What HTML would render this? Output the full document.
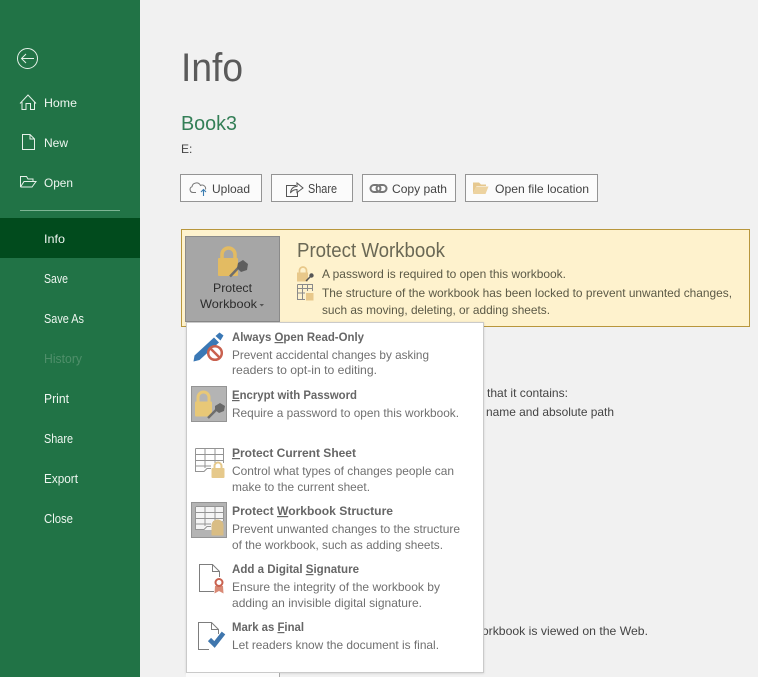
<!DOCTYPE html>
<html><head><meta charset="utf-8"><title>Info</title>
<style>
html,body{margin:0;padding:0;background:#f1f1f1;width:758px;height:677px;overflow:hidden}
svg{display:block}
text{font-family:"Liberation Sans",sans-serif;font-size:12px;white-space:pre}
.n{fill:#eef6f0}
.b{font-weight:bold;fill:#666}
.d{fill:#707070}
.y{fill:#5b5946}
.k{fill:#444}
</style></head><body>
<svg width="758" height="677" viewBox="0 0 758 677" xmlns="http://www.w3.org/2000/svg">
<defs>
<filter id="s" x="-5%" y="-5%" width="110%" height="110%"><feDropShadow dx="0" dy="0.500" stdDeviation="1" flood-color="#000" flood-opacity=".14"/></filter>
<g id="sheet" fill="none" stroke="#949494" stroke-width="1"><path d="M.5 .5H28.5V15M.5 .5V23.500H9L12 20.500H16"/><path d="M.5 6.500H28.5M.5 12.500H28.5M.5 18H16M10 .5V20M20 .5V15"/></g>
</defs>
<rect width="758" height="677" fill="#f1f1f1"/>
<!-- sidebar -->
<rect width="140" height="677" fill="#217346"/>
<rect y="218" width="140" height="40" fill="#014b1d"/>
<rect x="20" y="210" width="100" height="1" fill="#7db594"/>
<g fill="none" stroke="#e6f1e9" stroke-width="1">
<circle cx="27.500" cy="58.500" r="10"/>
<path d="M34 58.500H21.500M26 54L21.500 58.500L26 63"/>
<path d="M20 103.500L28 95L36 103.500M22 102V109.500H26V103.500H30.500V109.500H34.500V102"/>
<path d="M22.500 134.500H30L34.500 139V149.500H22.500ZM30 134.500V139H34.500"/>
<path d="M20.500 187V176.500H26.500L28 179H33V181.500M20.500 187H32L36 181.500H24L20.500 187"/>
</g>
<text class="n" x="44" y="107" textLength="33" lengthAdjust="spacingAndGlyphs">Home</text>
<text class="n" x="44" y="147" textLength="24" lengthAdjust="spacingAndGlyphs">New</text>
<text class="n" x="44" y="187" textLength="29" lengthAdjust="spacingAndGlyphs">Open</text>
<text class="n" x="44" y="243" textLength="21" lengthAdjust="spacingAndGlyphs">Info</text>
<text class="n" x="44" y="283" textLength="24" lengthAdjust="spacingAndGlyphs" style="font-size:13px">Save</text>
<text class="n" x="44" y="323" textLength="40" lengthAdjust="spacingAndGlyphs" style="font-size:13px">Save As</text>
<text x="44" y="363" textLength="38" lengthAdjust="spacingAndGlyphs" fill="#4f8f6a" style="font-size:13px">History</text>
<text class="n" x="44" y="403" textLength="25" lengthAdjust="spacingAndGlyphs" style="font-size:13px">Print</text>
<text class="n" x="44" y="443" textLength="29" lengthAdjust="spacingAndGlyphs" style="font-size:13px">Share</text>
<text class="n" x="44" y="483" textLength="34" lengthAdjust="spacingAndGlyphs" style="font-size:13px">Export</text>
<text class="n" x="44" y="523" textLength="29" lengthAdjust="spacingAndGlyphs" style="font-size:13px">Close</text>
<!-- header -->
<text x="181" y="81" textLength="62" lengthAdjust="spacingAndGlyphs" style="font-size:40px" fill="#5a5a5a">Info</text>
<text x="181" y="130" textLength="56" lengthAdjust="spacingAndGlyphs" style="font-size:20px" fill="#347f57">Book3</text>
<text class="k" x="181" y="153">E:</text>
<!-- buttons -->
<g fill="#fbfbfb" stroke="#949494">
<rect x="180.500" y="174.500" width="81" height="27"/>
<rect x="271.500" y="174.500" width="81" height="27"/>
<rect x="362.500" y="174.500" width="93" height="27"/>
<rect x="465.500" y="174.500" width="132" height="27"/>
</g>
<path d="M196 192.500H193A3 3 0 0 1 192 186.700A4.500 4.500 0 0 1 200.500 185.500A3.500 3.500 0 0 1 205.500 189.500" fill="none" stroke="#777"/>
<path d="M203.500 196V189.500M201 192L203.500 189.500L206 192" fill="none" stroke="#3a7cb0" stroke-width="1.100"/>
<path d="M296 185.500H286.500V196.500H297.500V191" fill="none" stroke="#555"/>
<path d="M290.500 193C291 188 294 186.500 297 186.500V183L303 188L297 192.500V189.500C294.500 189.500 292 190.500 290.500 193Z" fill="#fbfbfb" stroke="#555"/>
<rect x="370.500" y="185" width="10" height="7" rx="3.500" fill="none" stroke="#777" stroke-width="2"/>
<rect x="376.500" y="185" width="10" height="7" rx="3.500" fill="none" stroke="#777" stroke-width="2"/>
<path d="M473 193.500V182.500H479L481 184.500H486V186H476.500Z" fill="#e6c88f"/><path d="M473 194H485.500L488.500 186.500H476Z" fill="#edd3a0"/>
<g class="k">
<text x="212" y="193" textLength="38" lengthAdjust="spacingAndGlyphs">Upload</text>
<text x="308" y="193" textLength="29" lengthAdjust="spacingAndGlyphs" style="font-size:13px">Share</text>
<text x="392" y="193" textLength="55" lengthAdjust="spacingAndGlyphs">Copy path</text>
<text x="495" y="193" textLength="94" lengthAdjust="spacingAndGlyphs">Open file location</text>
</g>
<!-- background text -->
<g class="k">
<text x="487" y="397" textLength="81" lengthAdjust="spacingAndGlyphs">that it contains:</text>
<text x="486" y="416" textLength="128" lengthAdjust="spacingAndGlyphs">name and absolute path</text>
<text x="473" y="635" textLength="175" lengthAdjust="spacingAndGlyphs">workbook is viewed on the Web.</text>
</g>
<!-- banner -->
<rect x="181.500" y="229.500" width="568" height="97" fill="#fef2cd" stroke="#b8963c"/>
<rect x="185.500" y="236.500" width="94" height="85" fill="#a6a6a6" stroke="#8a8a8a"/>
<path d="M222 259V254.500A6.500 6.500 0 0 1 235 254.500V259" fill="none" stroke="#e3bb62" stroke-width="3.500"/>
<rect x="218" y="258" width="20" height="18" rx="1" fill="#e3bb62"/>
<path d="M230 276.500L239 267" stroke="#6e6e6e" stroke-width="2.500" fill="none"/>
<path d="M238 263L243 260L248 264L247 270L241 272L237 268Z" fill="#5e5e5e"/>
<text x="213" y="292" textLength="39" lengthAdjust="spacingAndGlyphs" fill="#2c2c2c">Protect</text>
<text x="200" y="308" textLength="57" lengthAdjust="spacingAndGlyphs" fill="#2c2c2c">Workbook</text>
<path d="M259.500 304H264L261.750 306.500Z" fill="#555"/>
<text class="y" x="297" y="257" textLength="148" lengthAdjust="spacingAndGlyphs" style="font-size:20px;fill:#6a6855">Protect Workbook</text>
<text class="y" x="322" y="278" textLength="244" lengthAdjust="spacingAndGlyphs">A password is required to open this workbook.</text>
<text class="y" x="322" y="297" textLength="410" lengthAdjust="spacingAndGlyphs">The structure of the workbook has been locked to prevent unwanted changes,</text>
<text class="y" x="322" y="314" textLength="228" lengthAdjust="spacingAndGlyphs">such as moving, deleting, or adding sheets.</text>
<path d="M299.500 273V270.500A3.500 3.500 0 0 1 306.500 270.500V273" fill="none" stroke="#e8c88a" stroke-width="1.700"/>
<rect x="297" y="272.500" width="11" height="9" fill="#e8c88a"/>
<path d="M306 281L311 276" stroke="#555" stroke-width="1.500"/><circle cx="311.500" cy="275.500" r="2.200" fill="#555"/>
<g fill="none" stroke="#8a8a8a"><path d="M297.500 284.500H312.500V291M297.500 284.500V299.500H305M297.500 288.500H312.500M297.500 293H305M302.500 284.500V299.500M307.500 284.500V291"/></g>
<rect x="306" y="293" width="7.500" height="7.500" fill="#e8c88a"/>
<!-- menu -->
<rect x="186.500" y="322.500" width="297" height="350" fill="#fff" stroke="#cacaca" filter="url(#s)"/>
<rect x="186" y="673" width="93" height="4" fill="#fbfbfb"/>
<rect x="279" y="673" width="1" height="4" fill="#a8a8a8"/>
<!-- read only -->
<path d="M193.500 361.500L194.500 355.500L214 337.500L219 342.500L199.500 360Z" fill="#3a78b5"/>
<path d="M215.500 336L219.500 332.500L223.500 335.500L220.500 340.500Z" fill="#3a78b5"/>
<circle cx="215" cy="353" r="6.800" fill="#fff" stroke="#c9614f" stroke-width="2.500"/>
<path d="M210.500 348.500L219.500 357.500" stroke="#c9614f" stroke-width="2.500"/>
<text class="b" x="232" y="341" textLength="132" lengthAdjust="spacingAndGlyphs">Always <tspan text-decoration="underline">O</tspan>pen Read-Only</text>
<text class="d" x="232" y="359" textLength="197" lengthAdjust="spacingAndGlyphs">Prevent accidental changes by asking</text>
<text class="d" x="232" y="374" textLength="145" lengthAdjust="spacingAndGlyphs">readers to opt-in to editing.</text>
<!-- encrypt -->
<rect x="191.500" y="386.500" width="35" height="35" fill="#b4b4b4" stroke="#949494"/>
<path d="M198 402.500V397.500A5.500 5.500 0 0 1 209 397.500V402.500" fill="none" stroke="#e8c877" stroke-width="3"/>
<rect x="195" y="401.500" width="17" height="15" rx="1" fill="#e8c877"/>
<path d="M208 418L216 410" stroke="#6e6e6e" stroke-width="2.500"/>
<path d="M215 406L220 403L225 406L224 411L219 413L215 410Z" fill="#686868"/>
<text class="b" x="232" y="399" textLength="125" lengthAdjust="spacingAndGlyphs"><tspan text-decoration="underline">E</tspan>ncrypt with Password</text>
<text class="d" x="232" y="417" textLength="227" lengthAdjust="spacingAndGlyphs">Require a password to open this workbook.</text>
<!-- current sheet -->
<use href="#sheet" x="195" y="448"/>
<path d="M214.500 468.500V466A3.500 3.500 0 0 1 221.500 466V468.500" fill="none" stroke="#e6c98b" stroke-width="2"/>
<rect x="211.500" y="468" width="13" height="10" rx="1" fill="#e6c98b"/>
<text class="b" x="232" y="457" textLength="124" lengthAdjust="spacingAndGlyphs"><tspan text-decoration="underline">P</tspan>rotect Current Sheet</text>
<text class="d" x="232" y="475" textLength="222" lengthAdjust="spacingAndGlyphs">Control what types of changes people can</text>
<text class="d" x="232" y="491" textLength="138" lengthAdjust="spacingAndGlyphs">make to the current sheet.</text>
<!-- workbook structure -->
<rect x="191.500" y="502.500" width="35" height="35" fill="#b4b4b4" stroke="#949494"/>
<path d="M195 506H224V521H213V530H195Z" fill="#f4f4f4"/>
<use href="#sheet" x="195" y="506"/>
<path d="M211.500 535.500V525.500A6 6 0 0 1 223.500 525.500V535.500Z" fill="#d9bd84"/>
<text class="b" x="232" y="515" textLength="161" lengthAdjust="spacingAndGlyphs">Protect <tspan text-decoration="underline">W</tspan>orkbook Structure</text>
<text class="d" x="232" y="533" textLength="228" lengthAdjust="spacingAndGlyphs">Prevent unwanted changes to the structure</text>
<text class="d" x="232" y="549" textLength="211" lengthAdjust="spacingAndGlyphs">of the workbook, such as adding sheets.</text>
<!-- signature -->
<path d="M214 591.500H199.500V564.500H212.500L219.500 571.500V577M212.500 564.500V571.500H219.500" fill="none" stroke="#7d7d7d"/>
<path d="M215 586L214.500 593.500L219 591L223.500 593.500L223 586Z" fill="#d98a76"/>
<circle cx="219" cy="582.500" r="3.500" fill="#fff" stroke="#c9614f" stroke-width="2"/>
<text class="b" x="232" y="573" textLength="127" lengthAdjust="spacingAndGlyphs">Add a Digital <tspan text-decoration="underline">S</tspan>ignature</text>
<text class="d" x="232" y="591" textLength="208" lengthAdjust="spacingAndGlyphs">Ensure the integrity of the workbook by</text>
<text class="d" x="232" y="607" textLength="190" lengthAdjust="spacingAndGlyphs">adding an invisible digital signature.</text>
<!-- final -->
<path d="M209 649.500H198.500V622.500H211.500L218.500 629.500V634M211.500 622.500V629.500H218.500" fill="none" stroke="#7d7d7d"/>
<path d="M209.500 639.500L214.500 644.500L223.500 633" fill="none" stroke="#3f76ad" stroke-width="4.500"/>
<text class="b" x="232" y="631" textLength="72" lengthAdjust="spacingAndGlyphs">Mark as <tspan text-decoration="underline">F</tspan>inal</text>
<text class="d" x="232" y="649" textLength="207" lengthAdjust="spacingAndGlyphs">Let readers know the document is final.</text>
</svg>
</body></html>
